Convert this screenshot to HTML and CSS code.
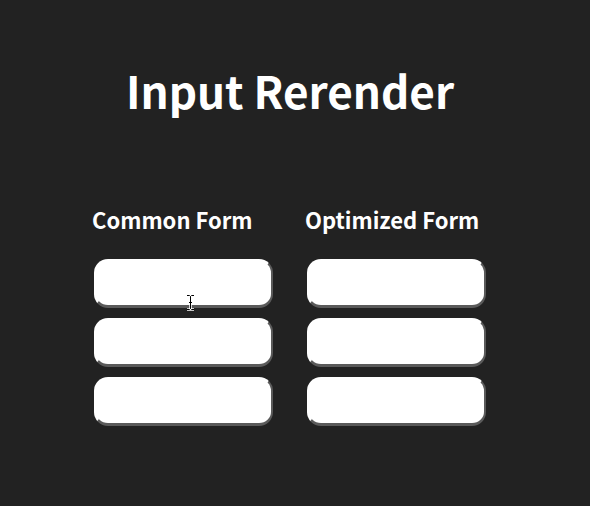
FILE: index.html
```html
<!DOCTYPE html>
<html lang="en">
<head>
    <meta charset="utf-8">
    <title>Input Rerender</title>
    <link rel="stylesheet" href="styles.css">
</head>
<body>
    <h1 class="title">Input Rerender</h1>
    <div class="forms">
        <div class="form">
            <h3 class="form-title">Common Form</h3>
            <input type="text" class="field">
            <input type="text" class="field">
            <input type="text" class="field">
        </div>
        <div class="form">
            <h3 class="form-title">Optimized Form</h3>
            <input type="text" class="field">
            <input type="text" class="field">
            <input type="text" class="field">
        </div>
    </div>
    <svg class="cursor" width="9" height="17" viewBox="0 0 9 17">
        <path d="M1 1.5h2.5l1 1 1-1H8M4.5 2.5v12M3 8.5h3M1 15.5h2.5l1-1 1 1H8" fill="none" stroke="#fff" stroke-width="2.5"/>
        <path d="M1 1.5h2.5l1 1 1-1H8M4.5 2.5v12M3 8.5h3M1 15.5h2.5l1-1 1 1H8" fill="none" stroke="#000" stroke-width="1"/>
    </svg>
</body>
</html>
```

FILE: styles.css
```css
body {
    position: relative;
    margin: 0;
    padding-right: 10px;
    background-color: #222222;
    color: #ffffff;
    font-family: "Noto Sans CJK KR", "Noto Sans", sans-serif;
    height: 506px;
    box-sizing: border-box;
}

.title {
    font-size: 44px;
    font-weight: 700;
    text-align: center;
    margin: 0;
    padding-top: 60px;
    line-height: 60px;
}

.forms {
    display: flex;
    justify-content: center;
    gap: 34px;
    margin-top: 84px;
}

.form {
    display: flex;
    flex-direction: column;
    width: 179px;
}

.form-title {
    font-size: 22px;
    font-weight: 700;
    line-height: 30px;
    margin: 0 0 25px -2px;
    white-space: nowrap;
}

.field {
    box-sizing: border-box;
    width: 179px;
    height: 49px;
    margin-bottom: 10px;
    border: 2px solid;
    border-color: #ffffff #5a5a5a #5a5a5a #ffffff;
    border-bottom-width: 3px;
    border-radius: 14px;
    background: #ffffff;
    outline: none;
}

/* mouse pointer over the first field */
.cursor {
    position: absolute;
    left: 186px;
    top: 294px;
}
```
